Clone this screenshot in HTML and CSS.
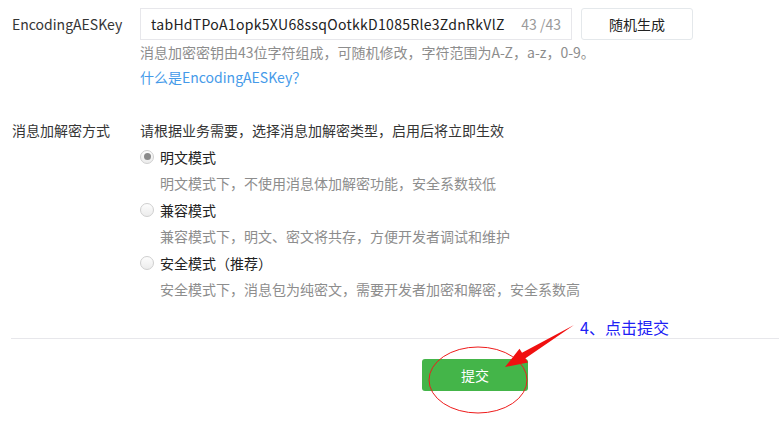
FILE: index.html
```html
<!DOCTYPE html>
<html lang="zh-CN">
<head>
<meta charset="utf-8">
<title>消息加解密</title>
<link rel="stylesheet" href="styles.css">
</head>
<body>
<div class="page">
  <div class="form-row row-key">
    <div class="label label-key">EncodingAESKey</div>
    <div class="content">
      <div class="controls">
        <div class="input">
          <span class="input-text">tabHdTPoA1opk5XU68ssqOotkkD1085Rle3ZdnRkVlZ</span>
          <span class="counter">43 /43</span>
        </div>
        <div class="btn-default">随机生成</div>
      </div>
      <div class="hint">消息加密密钥由43位字符组成，可随机修改，字符范围为A-Z，a-z，0-9。</div>
      <a class="link">什么是EncodingAESKey？</a>
    </div>
  </div>

  <div class="form-row row-mode">
    <div class="label">消息加解密方式</div>
    <div class="content">
      <div class="line desc">请根据业务需要，选择消息加解密类型，启用后将立即生效</div>
      <div class="line radio-line"><span class="radio checked"></span><span>明文模式</span></div>
      <div class="line sub">明文模式下，不使用消息体加解密功能，安全系数较低</div>
      <div class="line radio-line"><span class="radio"></span><span>兼容模式</span></div>
      <div class="line sub">兼容模式下，明文、密文将共存，方便开发者调试和维护</div>
      <div class="line radio-line"><span class="radio"></span><span>安全模式（推荐）</span></div>
      <div class="line sub">安全模式下，消息包为纯密文，需要开发者加密和解密，安全系数高</div>
    </div>
  </div>

  <div class="divider"></div>

  <div class="actions">
    <div class="btn-primary">提交</div>
  </div>

  <div class="annot-text">4、点击提交</div>
  <svg class="annot" width="779" height="421" viewBox="0 0 779 421">
    <ellipse cx="478" cy="380" rx="49" ry="33" fill="none" stroke="#ee1c1c" stroke-width="1"/>
    <polygon points="574,325 525.5,358.3 528,362.5 505,367 519.5,348.7 522,352.7" fill="#f01010"/>
  </svg>
</div>
</body>
</html>
```

FILE: styles.css
```css
* { box-sizing: border-box; }
html, body {
  margin: 0;
  padding: 0;
  background: #fff;
}
body {
  font-family: "Noto Sans CJK SC", "Noto Sans", sans-serif;
  font-size: 14px;
  color: #353535;
}
.page {
  position: relative;
  width: 779px;
  height: 421px;
  padding-top: 8px;
  overflow: hidden;
}
.form-row {
  display: flex;
}
.label {
  width: 140px;
  padding-left: 12px;
  flex-shrink: 0;
  color: #353535;
}
.label-key {
  line-height: 32px;
}
.content {
  display: flex;
  flex-direction: column;
}
.controls {
  display: flex;
  gap: 9px;
}
.input {
  width: 432px;
  height: 32px;
  border: 1px solid #e7e7eb;
  display: flex;
  align-items: center;
  padding: 0 10px 0 10px;
  gap: 15px;
}
.input-text {
  flex: 1;
  overflow: hidden;
  white-space: nowrap;
  color: #222;
  font-size: 14px;
  letter-spacing: 0.3px;
}
.counter {
  color: #9a9a9a;
  white-space: nowrap;
}
.btn-default {
  width: 112px;
  height: 32px;
  border: 1px solid #e4e8eb;
  border-radius: 3px;
  display: flex;
  align-items: center;
  justify-content: center;
  color: #222;
}
.hint {
  line-height: 25px;
  color: #8d8d8d;
}
.link {
  line-height: 25px;
  color: #459ae9;
}
.row-mode {
  margin-top: 27px;
}
.row-mode .label {
  line-height: 26.5px;
}
.line {
  line-height: 26.5px;
  white-space: nowrap;
}
.desc { color: #353535; }
.radio-line {
  display: flex;
  align-items: center;
  gap: 6px;
  color: #222;
}
.radio {
  width: 14px;
  height: 14px;
  border-radius: 50%;
  border: 1px solid #cfcfcf;
  background: linear-gradient(#fdfdfd, #ececec);
  display: flex;
  align-items: center;
  justify-content: center;
}
.radio.checked::after {
  content: "";
  width: 7px;
  height: 7px;
  border-radius: 50%;
  background: #8a8a8a;
}
.sub {
  padding-left: 20px;
  color: #8d8d8d;
}
.divider {
  margin: 35px 0 0 11px;
  height: 1px;
  background: #e7e7eb;
}
.actions {
  display: flex;
  padding-left: 422px;
  margin-top: 20px;
}
.btn-primary {
  width: 106px;
  height: 32px;
  border-radius: 3px;
  background: #44b549;
  color: #fff;
  display: flex;
  align-items: center;
  justify-content: center;
}
.annot {
  position: absolute;
  left: 0;
  top: 0;
  pointer-events: none;
}
.annot-text {
  position: absolute;
  left: 580px;
  top: 316px;
  font-size: 16px;
  color: #2020f5;
  line-height: 22px;
}
```
